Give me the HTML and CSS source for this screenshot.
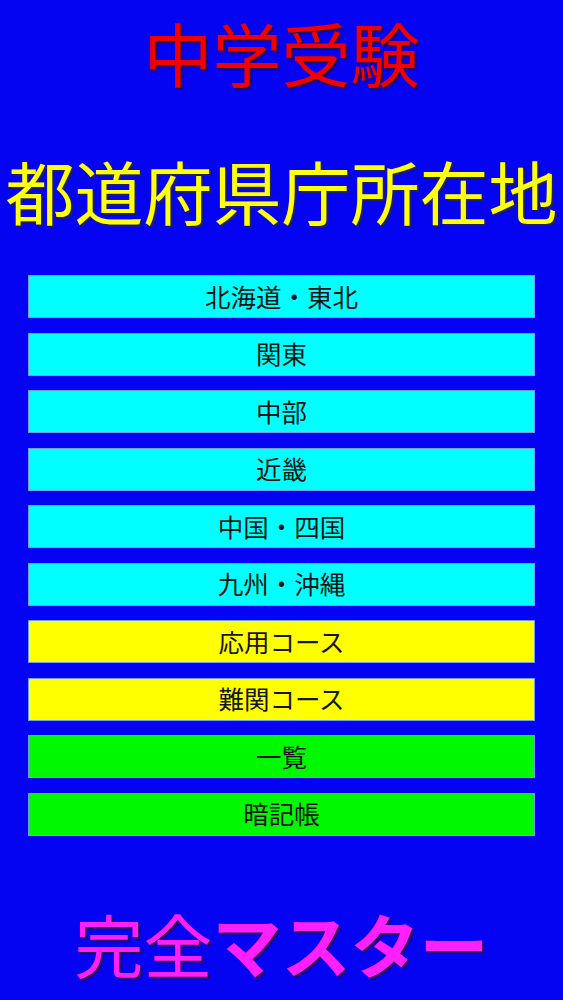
FILE: index.html
```html
<!DOCTYPE html>
<html lang="ja">
<head>
<meta charset="utf-8">
<title>中学受験 都道府県庁所在地</title>
<link rel="stylesheet" href="styles.css">
</head>
<body>
<main class="screen">
  <h1 class="title">中学受験</h1>
  <h2 class="subtitle">都道府県庁所在地</h2>
  <nav class="menu">
    <button class="btn btn-cyan">北海道・東北</button>
    <button class="btn btn-cyan">関東</button>
    <button class="btn btn-cyan">中部</button>
    <button class="btn btn-cyan">近畿</button>
    <button class="btn btn-cyan">中国・四国</button>
    <button class="btn btn-cyan">九州・沖縄</button>
    <button class="btn btn-yellow">応用コース</button>
    <button class="btn btn-yellow">難関コース</button>
    <button class="btn btn-green">一覧</button>
    <button class="btn btn-green">暗記帳</button>
  </nav>
  <p class="footer"><span class="light">完全</span><span class="bold">マスター</span></p>
</main>
</body>
</html>
```
FILE: styles.css
```css
html, body {
  margin: 0;
  padding: 0;
}
body {
  background: #0404f2;
  font-family: "Noto Sans CJK JP", "Noto Sans", sans-serif;
}
.screen {
  width: 563px;
  height: 1000px;
  display: flex;
  flex-direction: column;
  align-items: center;
  overflow: hidden;
}
.title {
  margin: 18px 0 0;
  font-size: 69px;
  line-height: 68px;
  font-weight: 400;
  color: #f20000;
  text-shadow: 2px 2px 1px #2a0050;
  white-space: nowrap;
}
.subtitle {
  margin: 70px 0 0;
  font-size: 69px;
  line-height: 69px;
  font-weight: 400;
  color: #ffff10;
  text-shadow: 2px 2px 1px #202060;
  white-space: nowrap;
}
.menu {
  margin-top: 50px;
  width: 507px;
  display: flex;
  flex-direction: column;
  gap: 14.5px;
}
.btn {
  height: 43px;
  margin: 0;
  padding: 0 0 3px;
  border: 1px solid #6fa0f0;
  font-family: inherit;
  font-size: 25.5px;
  font-weight: 400;
  color: #151515;
  display: flex;
  align-items: center;
  justify-content: center;
}
.btn-cyan { background: #00ffff; }
.btn-yellow { background: #ffff00; }
.btn-green { background: #00f800; }
.footer {
  margin: 73px 0 0;
  font-size: 69px;
  line-height: 68px;
  color: #ff20ff;
  text-shadow: 2px 2px 1px #300050;
  white-space: nowrap;
}
.light { font-weight: 400; }
.bold { font-weight: 700; }
```
